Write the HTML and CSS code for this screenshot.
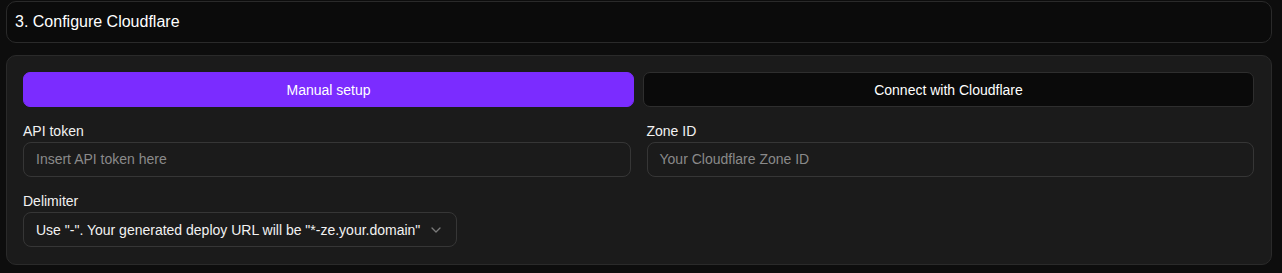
FILE: index.html
```html
<!DOCTYPE html>
<html lang="en">
<head>
<meta charset="utf-8">
<title>Configure Cloudflare</title>
<link rel="stylesheet" href="styles.css">
</head>
<body>
<div class="page">
  <div class="step-header">3. Configure Cloudflare</div>
  <div class="panel">
    <div class="tabs">
      <button class="tab tab-active">Manual setup</button>
      <button class="tab">Connect with Cloudflare</button>
    </div>
    <div class="fields">
      <div class="field">
        <label class="label">API token</label>
        <div class="input placeholder">Insert API token here</div>
      </div>
      <div class="field">
        <label class="label">Zone ID</label>
        <div class="input placeholder">Your Cloudflare Zone ID</div>
      </div>
    </div>
    <div class="field">
      <label class="label">Delimiter</label>
      <div class="select">
        <span>Use "-". Your generated deploy URL will be "*-ze.your.domain"</span>
        <svg class="chevron" width="10" height="6" viewBox="0 0 10 6"><path d="M1 1l4 4 4-4" fill="none" stroke="#7a7a7a" stroke-width="1.3" stroke-linecap="round" stroke-linejoin="round"/></svg>
      </div>
    </div>
  </div>
</div>
</body>
</html>
```
FILE: styles.css
```css
html, body {
  margin: 0;
  padding: 0;
  background: #0d0d0d;
  font-family: "Liberation Sans", Arial, sans-serif;
  color: #f2f2f2;
}
.page {
  padding: 1px 10px 8px 6px;
  display: flex;
  flex-direction: column;
  gap: 12px;
}
.step-header {
  height: 40px;
  border: 1px solid #2a2a2a;
  border-radius: 10px;
  background: #0b0b0b;
  font-size: 16px;
  line-height: 40px;
  padding-left: 8px;
  color: #ffffff;
}
.panel {
  border: 1px solid #2a2a2a;
  border-radius: 10px;
  background: #1b1b1b;
  padding: 16px 17px 17px 16px;
  display: flex;
  flex-direction: column;
  gap: 16px;
}
.tabs {
  display: grid;
  grid-template-columns: 1fr 1fr;
  gap: 9px;
}
.tab {
  height: 35px;
  border-radius: 7px;
  border: 1px solid #2e2e2e;
  background: #0a0a0a;
  color: #ffffff;
  font-family: inherit;
  font-size: 14px;
  padding: 0;
}
.tab-active {
  background: #7b2cff;
  border-color: #7b2cff;
}
.fields {
  display: grid;
  grid-template-columns: 1fr 1fr;
  gap: 16px;
}
.field {
  display: flex;
  flex-direction: column;
  align-items: flex-start;
}
.label {
  font-size: 14px;
  line-height: 17px;
  margin-bottom: 2px;
  color: #f2f2f2;
}
.input {
  box-sizing: border-box;
  width: 100%;
  height: 35px;
  border: 1px solid #363636;
  border-radius: 8px;
  padding: 0 12px;
  font-size: 14px;
  line-height: 33px;
}
.placeholder {
  color: #8a8a8a;
}
.select {
  box-sizing: border-box;
  height: 35px;
  border: 1px solid #363636;
  border-radius: 8px;
  padding: 0 15px 0 12px;
  font-size: 14px;
  display: flex;
  align-items: center;
  gap: 11px;
  color: #f2f2f2;
}
.chevron {
  display: block;
}
```
